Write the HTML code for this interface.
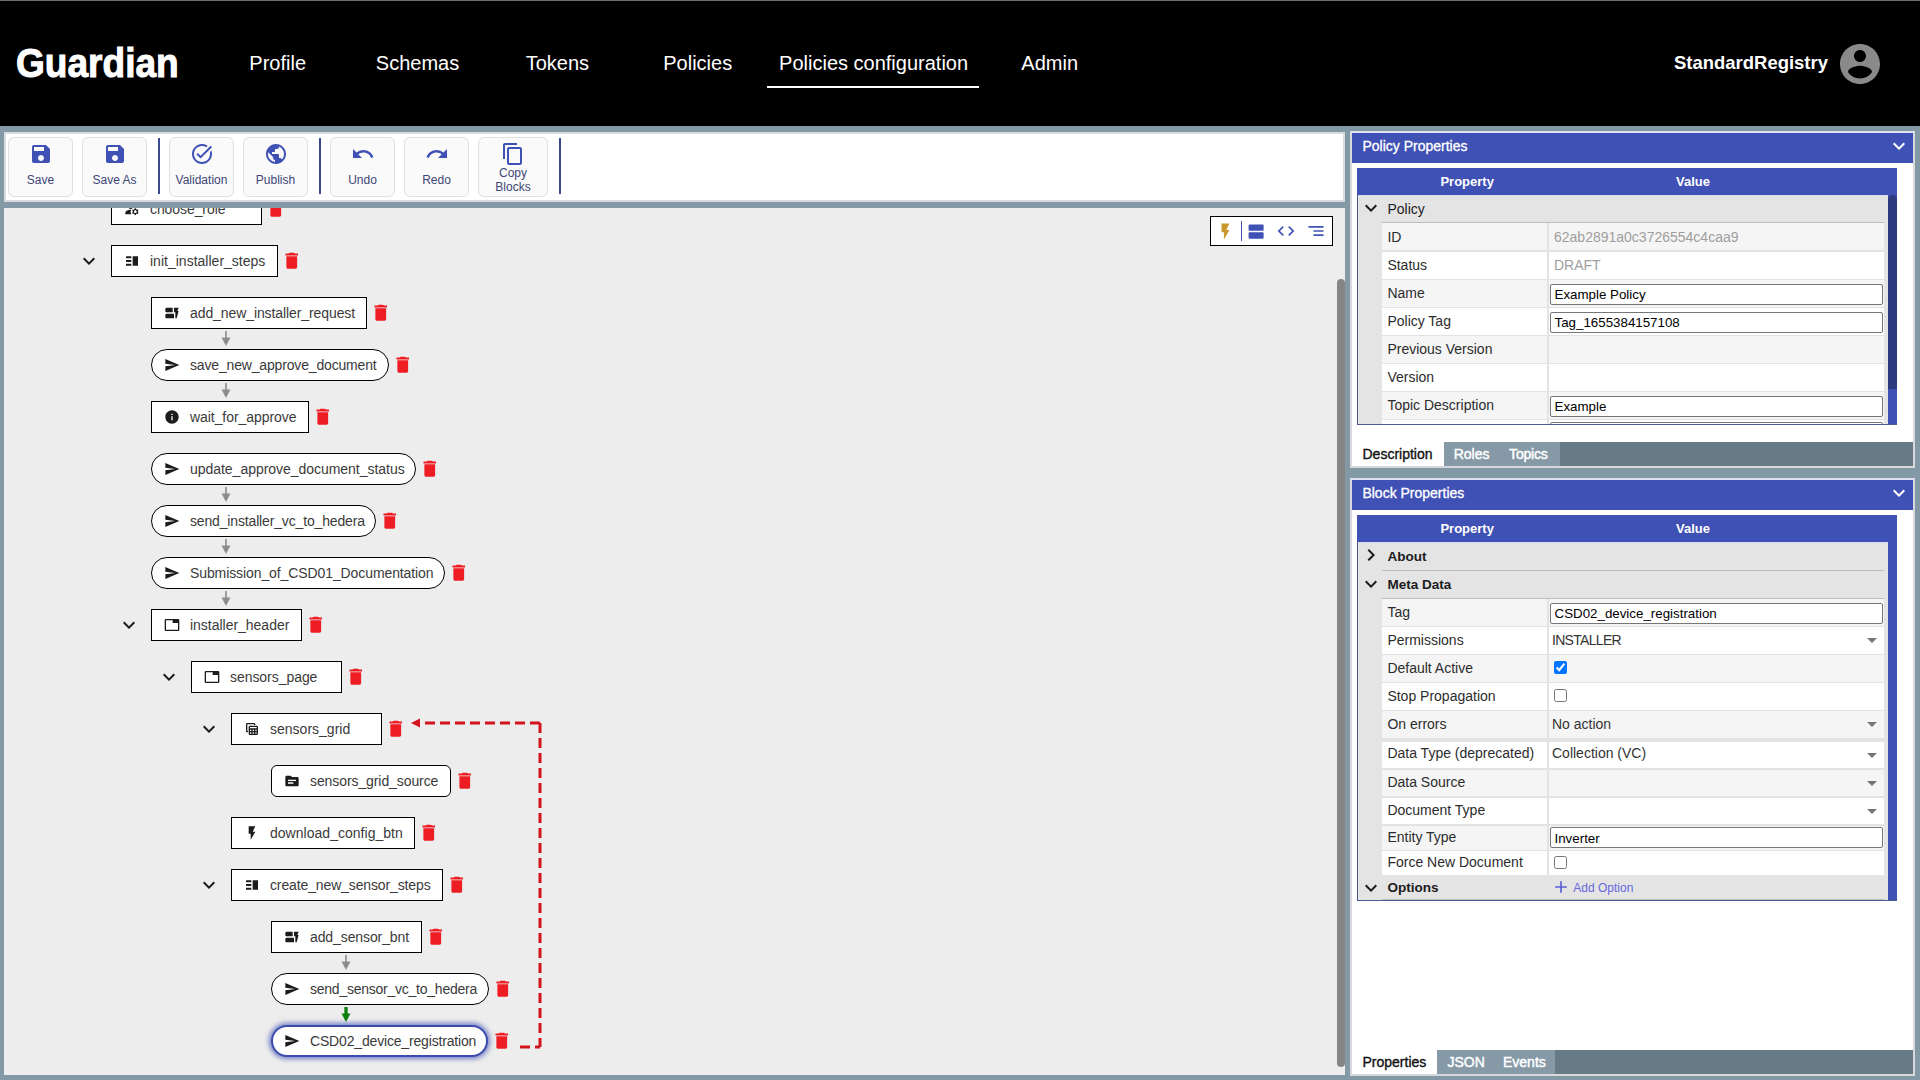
<!DOCTYPE html>
<html><head><meta charset="utf-8"><title>Guardian</title>
<style>
html,body{margin:0;padding:0;width:1920px;height:1080px;overflow:hidden;background:#8399a6;font-family:"Liberation Sans",sans-serif;}
.t{position:absolute;white-space:nowrap;line-height:1;}
svg{display:block}
</style></head><body>
<div style="position:absolute;left:0px;top:0px;width:1920px;height:126px;background:#000"></div>
<div style="position:absolute;left:0px;top:0px;width:1920px;height:1px;background:#6f6f6f"></div>
<div class="t" style="left:15.8px;top:43.02px;font-size:40.5px;color:#fff;font-weight:700;transform:scaleX(0.915);transform-origin:0 0;-webkit-text-stroke:1px #fff;">Guardian</div>
<div class="t" style="left:-22.30000000000001px;width:600px;text-align:center;top:53.07px;font-size:20px;color:#fff;font-weight:400;">Profile</div>
<div class="t" style="left:117.5px;width:600px;text-align:center;top:53.07px;font-size:20px;color:#fff;font-weight:400;">Schemas</div>
<div class="t" style="left:257.4px;width:600px;text-align:center;top:53.07px;font-size:20px;color:#fff;font-weight:400;">Tokens</div>
<div class="t" style="left:397.70000000000005px;width:600px;text-align:center;top:53.07px;font-size:20px;color:#fff;font-weight:400;">Policies</div>
<div class="t" style="left:573.6px;width:600px;text-align:center;top:53.07px;font-size:20px;color:#fff;font-weight:400;">Policies configuration</div>
<div class="t" style="left:749.7px;width:600px;text-align:center;top:53.07px;font-size:20px;color:#fff;font-weight:400;">Admin</div>
<div style="position:absolute;left:767px;top:86px;width:212px;height:2px;background:#fff"></div>
<div class="t" style="left:1673.5px;top:53.42px;font-size:19px;color:#fff;font-weight:700;transform:scaleX(0.972);transform-origin:0 0;">StandardRegistry</div>
<svg style="position:absolute;left:1836px;top:39.5px" width="48" height="48" viewBox="0 0 24 24"><path fill="#8a8a8a" d="M12 2C6.48 2 2 6.48 2 12s4.48 10 10 10 10-4.48 10-10S17.52 2 12 2zm0 3c1.66 0 3 1.34 3 3s-1.34 3-3 3-3-1.34-3-3 1.34-3 3-3zm0 14.2c-2.5 0-4.71-1.28-6-3.22.03-1.99 4-3.08 6-3.08 1.99 0 5.97 1.09 6 3.08-1.29 1.94-3.5 3.22-6 3.22z"/></svg>
<div style="position:absolute;left:4px;top:132px;width:1337px;height:66px;background:#fff;border:2px solid #d9dcdf"></div>
<div style="position:absolute;left:8px;top:137px;width:63px;height:58px;background:#fafafa;border:1px solid #e0e0e0;border-radius:6px"></div>
<svg style="position:absolute;left:28.5px;top:142px" width="24" height="24" viewBox="0 0 24 24"><path fill="#3f51b5" d="M17 3H5c-1.11 0-2 .9-2 2v14c0 1.1.89 2 2 2h14c1.1 0 2-.9 2-2V7l-4-4zm-5 16c-1.66 0-3-1.34-3-3s1.34-3 3-3 3 1.34 3 3-1.34 3-3 3zm3-10H5V5h10v4z"/></svg>
<div class="t" style="left:-259.5px;width:600px;text-align:center;top:173.64px;font-size:12px;color:#3d4677;font-weight:400;">Save</div>
<div style="position:absolute;left:82px;top:137px;width:63px;height:58px;background:#fafafa;border:1px solid #e0e0e0;border-radius:6px"></div>
<svg style="position:absolute;left:102.5px;top:142px" width="24" height="24" viewBox="0 0 24 24"><path fill="#3f51b5" d="M17 3H5c-1.11 0-2 .9-2 2v14c0 1.1.89 2 2 2h14c1.1 0 2-.9 2-2V7l-4-4zm-5 16c-1.66 0-3-1.34-3-3s1.34-3 3-3 3 1.34 3 3-1.34 3-3 3zm3-10H5V5h10v4z"/></svg>
<div class="t" style="left:-185.5px;width:600px;text-align:center;top:173.64px;font-size:12px;color:#3d4677;font-weight:400;">Save As</div>
<div style="position:absolute;left:169px;top:137px;width:63px;height:58px;background:#fafafa;border:1px solid #e0e0e0;border-radius:6px"></div>
<svg style="position:absolute;left:189.5px;top:142px" width="24" height="24" viewBox="0 0 24 24"><path fill="#3f51b5" d="M22 5.18L10.59 16.6l-4.24-4.24 1.41-1.41 2.83 2.83 10-10L22 5.18zm-2.21 5.04c.13.57.21 1.17.21 1.78 0 4.42-3.58 8-8 8s-8-3.58-8-8 3.58-8 8-8c1.58 0 3.04.46 4.28 1.25l1.44-1.44C16.1 2.67 14.13 2 12 2 6.48 2 2 6.48 2 12s4.48 10 10 10 10-4.48 10-10c0-1.19-.22-2.33-.6-3.39l-1.61 1.61z"/></svg>
<div class="t" style="left:-98.5px;width:600px;text-align:center;top:173.64px;font-size:12px;color:#3d4677;font-weight:400;">Validation</div>
<div style="position:absolute;left:243px;top:137px;width:63px;height:58px;background:#fafafa;border:1px solid #e0e0e0;border-radius:6px"></div>
<svg style="position:absolute;left:263.5px;top:142px" width="24" height="24" viewBox="0 0 24 24"><path fill="#3f51b5" d="M12 2C6.48 2 2 6.48 2 12s4.48 10 10 10 10-4.48 10-10S17.52 2 12 2zm-1 17.93c-3.95-.49-7-3.85-7-7.93 0-.62.08-1.21.21-1.79L9 15v1c0 1.1.9 2 2 2v1.93zm6.9-2.54c-.26-.81-1-1.39-1.9-1.39h-1v-3c0-.55-.45-1-1-1H8v-2h2c.55 0 1-.45 1-1V7h2c1.1 0 2-.9 2-2v-.41c2.93 1.19 5 4.06 5 7.41 0 2.08-.8 3.97-2.1 5.39z"/></svg>
<div class="t" style="left:-24.5px;width:600px;text-align:center;top:173.64px;font-size:12px;color:#3d4677;font-weight:400;">Publish</div>
<div style="position:absolute;left:330px;top:137px;width:63px;height:58px;background:#fafafa;border:1px solid #e0e0e0;border-radius:6px"></div>
<svg style="position:absolute;left:350.5px;top:142px" width="24" height="24" viewBox="0 0 24 24"><path fill="#3f51b5" d="M12.5 8c-2.65 0-5.05.99-6.9 2.6L2 7v9h9l-3.62-3.62c1.39-1.16 3.16-1.88 5.12-1.88 3.54 0 6.55 2.31 7.6 5.5l2.37-.78C21.08 11.03 17.15 8 12.5 8z"/></svg>
<div class="t" style="left:62.5px;width:600px;text-align:center;top:173.64px;font-size:12px;color:#3d4677;font-weight:400;">Undo</div>
<div style="position:absolute;left:404px;top:137px;width:63px;height:58px;background:#fafafa;border:1px solid #e0e0e0;border-radius:6px"></div>
<svg style="position:absolute;left:424.5px;top:142px" width="24" height="24" viewBox="0 0 24 24"><path fill="#3f51b5" d="M18.4 10.6C16.55 8.99 14.15 8 11.5 8c-4.65 0-8.58 3.03-9.96 7.22L3.9 16c1.05-3.19 4.05-5.5 7.6-5.5 1.95 0 3.73.72 5.12 1.88L13 16h9V7l-3.6 3.6z"/></svg>
<div class="t" style="left:136.5px;width:600px;text-align:center;top:173.64px;font-size:12px;color:#3d4677;font-weight:400;">Redo</div>
<div style="position:absolute;left:478px;top:137px;width:68px;height:58px;background:#fafafa;border:1px solid #e0e0e0;border-radius:6px"></div>
<svg style="position:absolute;left:501.0px;top:142px" width="24" height="24" viewBox="0 0 24 24"><path fill="#3f51b5" d="M16 1H4c-1.1 0-2 .9-2 2v14h2V3h12V1zm3 4H8c-1.1 0-2 .9-2 2v14c0 1.1.9 2 2 2h11c1.1 0 2-.9 2-2V7c0-1.1-.9-2-2-2zm0 16H8V7h11v14z"/></svg>
<div class="t" style="left:473.0px;width:80px;text-align:center;top:165.54px;font-size:12px;line-height:14px;color:#3d4677">Copy<br>Blocks</div>
<div style="position:absolute;left:158px;top:138px;width:1.5px;height:56px;background:#3b4a8f"></div>
<div style="position:absolute;left:319px;top:138px;width:1.5px;height:56px;background:#3b4a8f"></div>
<div style="position:absolute;left:559px;top:138px;width:1.5px;height:56px;background:#3b4a8f"></div>
<div style="position:absolute;left:4px;top:208px;width:1341px;height:867px;background:#ededed;overflow:hidden"><div style="position:absolute;left:-4px;top:-208px;width:1920px;height:1080px">
<div style="position:absolute;left:111px;top:193px;width:149px;height:30px;background:#fff;border:1px solid #000;border-radius:0;"></div>
<svg style="position:absolute;left:124px;top:201px" width="16" height="16" viewBox="0 0 24 24"><path fill="#1c1c1c" d="M10.67 13.02c-.22-.01-.44-.02-.67-.02-2.42 0-4.68.67-6.61 1.82-.88.52-1.39 1.5-1.39 2.53V20h9.26c-.79-1.13-1.26-2.51-1.26-4 0-1.07.25-2.07.67-2.98zM20.75 16c0-.22-.03-.42-.06-.63l1.14-1.01-1-1.73-1.45.49c-.32-.27-.68-.48-1.08-.63L18 11h-2l-.3 1.49c-.4.15-.76.36-1.08.63l-1.45-.49-1 1.73 1.14 1.01c-.03.21-.06.41-.06.63s.03.42.06.63l-1.14 1.01 1 1.73 1.45-.49c.32.27.68.48 1.08.63L16 21h2l.3-1.49c.4-.15.76-.36 1.08-.63l1.45.49 1-1.73-1.14-1.01c.03-.21.06-.41.06-.63zM17 18c-1.1 0-2-.9-2-2s.9-2 2-2 2 .9 2 2-.9 2-2 2zM10 4a4 4 0 1 0 .001 0z"/></svg>
<div class="t" style="left:150px;top:202.15px;font-size:14px;color:#3a3a3a;font-weight:400;letter-spacing:-0.082px;">choose_role</div>
<svg style="position:absolute;left:265.2px;top:198.25px" width="21.5" height="21.5" viewBox="0 0 24 24"><path fill="#ee1d23" d="M6 19c0 1.1.9 2 2 2h8c1.1 0 2-.9 2-2V7H6v12zM19 4h-3.5l-1-1h-5l-1 1H5v2h14V4z"/></svg>
<div style="position:absolute;left:111px;top:245px;width:165px;height:30px;background:#fff;border:1px solid #000;border-radius:0;"></div>
<svg style="position:absolute;left:124px;top:253px" width="16" height="16" viewBox="0 0 24 24"><path fill="#1c1c1c" d="M3 5h8v2.7H3zM3 10.65h8v2.7H3zM3 16.3h8v2.7H3zM13 5h8v14h-8z"/></svg>
<div class="t" style="left:150px;top:254.15px;font-size:14px;color:#3a3a3a;font-weight:400;letter-spacing:0.010px;">init_installer_steps</div>
<svg style="position:absolute;left:281.2px;top:250.25px" width="21.5" height="21.5" viewBox="0 0 24 24"><path fill="#ee1d23" d="M6 19c0 1.1.9 2 2 2h8c1.1 0 2-.9 2-2V7H6v12zM19 4h-3.5l-1-1h-5l-1 1H5v2h14V4z"/></svg>
<svg style="position:absolute;left:77px;top:249px" width="24" height="24" viewBox="0 0 24 24"><path fill="#1c1c1c" d="M16.59 8.59L12 13.17 7.41 8.59 6 10l6 6 6-6z"/></svg>
<div style="position:absolute;left:151px;top:297px;width:214px;height:30px;background:#fff;border:1px solid #000;border-radius:0;"></div>
<svg style="position:absolute;left:164px;top:305px" width="16" height="16" viewBox="0 0 24 24"><path fill="#1c1c1c" d="M17 20v-9h-2V4h7l-2 5h2l-3 11zM15 13v7H4c-1.1 0-2-.9-2-2v-3c0-1.1.9-2 2-2h11zM13 4v7H4c-1.1 0-2-.9-2-2V6c0-1.1.9-2 2-2h9z"/></svg>
<div class="t" style="left:190px;top:306.15px;font-size:14px;color:#3a3a3a;font-weight:400;letter-spacing:-0.092px;">add_new_installer_request</div>
<svg style="position:absolute;left:370.2px;top:302.25px" width="21.5" height="21.5" viewBox="0 0 24 24"><path fill="#ee1d23" d="M6 19c0 1.1.9 2 2 2h8c1.1 0 2-.9 2-2V7H6v12zM19 4h-3.5l-1-1h-5l-1 1H5v2h14V4z"/></svg>
<div style="position:absolute;left:151px;top:349px;width:236px;height:30px;background:#fff;border:1px solid #000;border-radius:16px;"></div>
<svg style="position:absolute;left:164px;top:357px" width="16" height="16" viewBox="0 0 24 24"><path fill="#1c1c1c" d="M2.01 21L23 12 2.01 3 2 10l15 2-15 2z"/></svg>
<div class="t" style="left:190px;top:358.15px;font-size:14px;color:#3a3a3a;font-weight:400;letter-spacing:-0.164px;">save_new_approve_document</div>
<svg style="position:absolute;left:392.2px;top:354.25px" width="21.5" height="21.5" viewBox="0 0 24 24"><path fill="#ee1d23" d="M6 19c0 1.1.9 2 2 2h8c1.1 0 2-.9 2-2V7H6v12zM19 4h-3.5l-1-1h-5l-1 1H5v2h14V4z"/></svg>
<div style="position:absolute;left:151px;top:401px;width:156px;height:30px;background:#fff;border:1px solid #000;border-radius:0;"></div>
<svg style="position:absolute;left:164px;top:409px" width="16" height="16" viewBox="0 0 24 24"><path fill="#1c1c1c" d="M12 2C6.48 2 2 6.48 2 12s4.48 10 10 10 10-4.48 10-10S17.52 2 12 2zm1 15h-2v-6h2v6zm0-8h-2V7h2v2z"/></svg>
<div class="t" style="left:190px;top:410.15px;font-size:14px;color:#3a3a3a;font-weight:400;letter-spacing:-0.062px;">wait_for_approve</div>
<svg style="position:absolute;left:312.2px;top:406.25px" width="21.5" height="21.5" viewBox="0 0 24 24"><path fill="#ee1d23" d="M6 19c0 1.1.9 2 2 2h8c1.1 0 2-.9 2-2V7H6v12zM19 4h-3.5l-1-1h-5l-1 1H5v2h14V4z"/></svg>
<div style="position:absolute;left:151px;top:453px;width:263px;height:30px;background:#fff;border:1px solid #000;border-radius:16px;"></div>
<svg style="position:absolute;left:164px;top:461px" width="16" height="16" viewBox="0 0 24 24"><path fill="#1c1c1c" d="M2.01 21L23 12 2.01 3 2 10l15 2-15 2z"/></svg>
<div class="t" style="left:190px;top:462.15px;font-size:14px;color:#3a3a3a;font-weight:400;letter-spacing:-0.033px;">update_approve_document_status</div>
<svg style="position:absolute;left:419.2px;top:458.25px" width="21.5" height="21.5" viewBox="0 0 24 24"><path fill="#ee1d23" d="M6 19c0 1.1.9 2 2 2h8c1.1 0 2-.9 2-2V7H6v12zM19 4h-3.5l-1-1h-5l-1 1H5v2h14V4z"/></svg>
<div style="position:absolute;left:151px;top:505px;width:223px;height:30px;background:#fff;border:1px solid #000;border-radius:16px;"></div>
<svg style="position:absolute;left:164px;top:513px" width="16" height="16" viewBox="0 0 24 24"><path fill="#1c1c1c" d="M2.01 21L23 12 2.01 3 2 10l15 2-15 2z"/></svg>
<div class="t" style="left:190px;top:514.15px;font-size:14px;color:#3a3a3a;font-weight:400;letter-spacing:-0.156px;">send_installer_vc_to_hedera</div>
<svg style="position:absolute;left:379.2px;top:510.25px" width="21.5" height="21.5" viewBox="0 0 24 24"><path fill="#ee1d23" d="M6 19c0 1.1.9 2 2 2h8c1.1 0 2-.9 2-2V7H6v12zM19 4h-3.5l-1-1h-5l-1 1H5v2h14V4z"/></svg>
<div style="position:absolute;left:151px;top:557px;width:292px;height:30px;background:#fff;border:1px solid #000;border-radius:16px;"></div>
<svg style="position:absolute;left:164px;top:565px" width="16" height="16" viewBox="0 0 24 24"><path fill="#1c1c1c" d="M2.01 21L23 12 2.01 3 2 10l15 2-15 2z"/></svg>
<div class="t" style="left:190px;top:566.15px;font-size:14px;color:#3a3a3a;font-weight:400;letter-spacing:-0.097px;">Submission_of_CSD01_Documentation</div>
<svg style="position:absolute;left:448.2px;top:562.25px" width="21.5" height="21.5" viewBox="0 0 24 24"><path fill="#ee1d23" d="M6 19c0 1.1.9 2 2 2h8c1.1 0 2-.9 2-2V7H6v12zM19 4h-3.5l-1-1h-5l-1 1H5v2h14V4z"/></svg>
<div style="position:absolute;left:151px;top:609px;width:149px;height:30px;background:#fff;border:1px solid #000;border-radius:0;"></div>
<svg style="position:absolute;left:164px;top:617px" width="16" height="16" viewBox="0 0 24 24"><path fill="#1c1c1c" d="M21 3H3c-1.1 0-2 .9-2 2v14c0 1.1.9 2 2 2h18c1.1 0 2-.9 2-2V5c0-1.1-.9-2-2-2zm0 16H3V5h10v4h8v10z"/></svg>
<div class="t" style="left:190px;top:618.15px;font-size:14px;color:#3a3a3a;font-weight:400;letter-spacing:-0.019px;">installer_header</div>
<svg style="position:absolute;left:305.2px;top:614.25px" width="21.5" height="21.5" viewBox="0 0 24 24"><path fill="#ee1d23" d="M6 19c0 1.1.9 2 2 2h8c1.1 0 2-.9 2-2V7H6v12zM19 4h-3.5l-1-1h-5l-1 1H5v2h14V4z"/></svg>
<svg style="position:absolute;left:117px;top:613px" width="24" height="24" viewBox="0 0 24 24"><path fill="#1c1c1c" d="M16.59 8.59L12 13.17 7.41 8.59 6 10l6 6 6-6z"/></svg>
<div style="position:absolute;left:191px;top:661px;width:149px;height:30px;background:#fff;border:1px solid #000;border-radius:0;"></div>
<svg style="position:absolute;left:204px;top:669px" width="16" height="16" viewBox="0 0 24 24"><path fill="#1c1c1c" d="M21 3H3c-1.1 0-2 .9-2 2v14c0 1.1.9 2 2 2h18c1.1 0 2-.9 2-2V5c0-1.1-.9-2-2-2zm0 16H3V5h10v4h8v10z"/></svg>
<div class="t" style="left:230px;top:670.15px;font-size:14px;color:#3a3a3a;font-weight:400;letter-spacing:-0.050px;">sensors_page</div>
<svg style="position:absolute;left:345.2px;top:666.25px" width="21.5" height="21.5" viewBox="0 0 24 24"><path fill="#ee1d23" d="M6 19c0 1.1.9 2 2 2h8c1.1 0 2-.9 2-2V7H6v12zM19 4h-3.5l-1-1h-5l-1 1H5v2h14V4z"/></svg>
<svg style="position:absolute;left:157px;top:665px" width="24" height="24" viewBox="0 0 24 24"><path fill="#1c1c1c" d="M16.59 8.59L12 13.17 7.41 8.59 6 10l6 6 6-6z"/></svg>
<div style="position:absolute;left:231px;top:713px;width:149px;height:30px;background:#fff;border:1px solid #000;border-radius:0;"></div>
<svg style="position:absolute;left:244px;top:721px" width="16" height="16" viewBox="0 0 24 24"><path fill="#1c1c1c" d="M19 7H9c-1.1 0-2 .9-2 2v10c0 1.1.9 2 2 2h10c1.1 0 2-.9 2-2V9c0-1.1-.9-2-2-2zm0 2v2H9V9h10zm-6 6v-2h2v2h-2zm2 2v2h-2v-2h2zm-4-2H9v-2h2v2zm6-2h2v2h-2v-2zm-8 4h2v2H9v-2zm8 2v-2h2v2h-2zM6 17H5c-1.1 0-2-.9-2-2V5c0-1.1.9-2 2-2h10c1.1 0 2 .9 2 2v1h-2V5H5v10h1v2z"/></svg>
<div class="t" style="left:270px;top:722.15px;font-size:14px;color:#3a3a3a;font-weight:400;letter-spacing:0.008px;">sensors_grid</div>
<svg style="position:absolute;left:385.2px;top:718.25px" width="21.5" height="21.5" viewBox="0 0 24 24"><path fill="#ee1d23" d="M6 19c0 1.1.9 2 2 2h8c1.1 0 2-.9 2-2V7H6v12zM19 4h-3.5l-1-1h-5l-1 1H5v2h14V4z"/></svg>
<svg style="position:absolute;left:197px;top:717px" width="24" height="24" viewBox="0 0 24 24"><path fill="#1c1c1c" d="M16.59 8.59L12 13.17 7.41 8.59 6 10l6 6 6-6z"/></svg>
<div style="position:absolute;left:271px;top:765px;width:178px;height:30px;background:#fff;border:1px solid #000;border-radius:6px;"></div>
<svg style="position:absolute;left:284px;top:773px" width="16" height="16" viewBox="0 0 24 24"><path fill="#1c1c1c" d="M20 6h-8l-2-2H4c-1.1 0-1.99.9-1.99 2L2 18c0 1.1.9 2 2 2h16c1.1 0 2-.9 2-2V8c0-1.1-.9-2-2-2zm-6 10H6v-2h8v2zm4-4H6v-2h12v2z"/></svg>
<div class="t" style="left:310px;top:774.15px;font-size:14px;color:#3a3a3a;font-weight:400;letter-spacing:-0.089px;">sensors_grid_source</div>
<svg style="position:absolute;left:454.2px;top:770.25px" width="21.5" height="21.5" viewBox="0 0 24 24"><path fill="#ee1d23" d="M6 19c0 1.1.9 2 2 2h8c1.1 0 2-.9 2-2V7H6v12zM19 4h-3.5l-1-1h-5l-1 1H5v2h14V4z"/></svg>
<div style="position:absolute;left:231px;top:817px;width:182px;height:30px;background:#fff;border:1px solid #000;border-radius:0;"></div>
<svg style="position:absolute;left:244px;top:825px" width="16" height="16" viewBox="0 0 24 24"><path fill="#1c1c1c" d="M7 2v11h3v9l7-12h-4l4-8z"/></svg>
<div class="t" style="left:270px;top:826.15px;font-size:14px;color:#3a3a3a;font-weight:400;letter-spacing:0.026px;">download_config_btn</div>
<svg style="position:absolute;left:418.2px;top:822.25px" width="21.5" height="21.5" viewBox="0 0 24 24"><path fill="#ee1d23" d="M6 19c0 1.1.9 2 2 2h8c1.1 0 2-.9 2-2V7H6v12zM19 4h-3.5l-1-1h-5l-1 1H5v2h14V4z"/></svg>
<div style="position:absolute;left:231px;top:869px;width:210px;height:30px;background:#fff;border:1px solid #000;border-radius:0;"></div>
<svg style="position:absolute;left:244px;top:877px" width="16" height="16" viewBox="0 0 24 24"><path fill="#1c1c1c" d="M3 5h8v2.7H3zM3 10.65h8v2.7H3zM3 16.3h8v2.7H3zM13 5h8v14h-8z"/></svg>
<div class="t" style="left:270px;top:878.15px;font-size:14px;color:#3a3a3a;font-weight:400;letter-spacing:-0.126px;">create_new_sensor_steps</div>
<svg style="position:absolute;left:446.2px;top:874.25px" width="21.5" height="21.5" viewBox="0 0 24 24"><path fill="#ee1d23" d="M6 19c0 1.1.9 2 2 2h8c1.1 0 2-.9 2-2V7H6v12zM19 4h-3.5l-1-1h-5l-1 1H5v2h14V4z"/></svg>
<svg style="position:absolute;left:197px;top:873px" width="24" height="24" viewBox="0 0 24 24"><path fill="#1c1c1c" d="M16.59 8.59L12 13.17 7.41 8.59 6 10l6 6 6-6z"/></svg>
<div style="position:absolute;left:271px;top:921px;width:149px;height:30px;background:#fff;border:1px solid #000;border-radius:0;"></div>
<svg style="position:absolute;left:284px;top:929px" width="16" height="16" viewBox="0 0 24 24"><path fill="#1c1c1c" d="M17 20v-9h-2V4h7l-2 5h2l-3 11zM15 13v7H4c-1.1 0-2-.9-2-2v-3c0-1.1.9-2 2-2h11zM13 4v7H4c-1.1 0-2-.9-2-2V6c0-1.1.9-2 2-2h9z"/></svg>
<div class="t" style="left:310px;top:930.15px;font-size:14px;color:#3a3a3a;font-weight:400;letter-spacing:-0.100px;">add_sensor_bnt</div>
<svg style="position:absolute;left:425.2px;top:926.25px" width="21.5" height="21.5" viewBox="0 0 24 24"><path fill="#ee1d23" d="M6 19c0 1.1.9 2 2 2h8c1.1 0 2-.9 2-2V7H6v12zM19 4h-3.5l-1-1h-5l-1 1H5v2h14V4z"/></svg>
<div style="position:absolute;left:271px;top:973px;width:216px;height:30px;background:#fff;border:1px solid #000;border-radius:16px;"></div>
<svg style="position:absolute;left:284px;top:981px" width="16" height="16" viewBox="0 0 24 24"><path fill="#1c1c1c" d="M2.01 21L23 12 2.01 3 2 10l15 2-15 2z"/></svg>
<div class="t" style="left:310px;top:982.15px;font-size:14px;color:#3a3a3a;font-weight:400;letter-spacing:-0.242px;">send_sensor_vc_to_hedera</div>
<svg style="position:absolute;left:492.2px;top:978.25px" width="21.5" height="21.5" viewBox="0 0 24 24"><path fill="#ee1d23" d="M6 19c0 1.1.9 2 2 2h8c1.1 0 2-.9 2-2V7H6v12zM19 4h-3.5l-1-1h-5l-1 1H5v2h14V4z"/></svg>
<div style="position:absolute;left:271px;top:1025px;width:213px;height:28px;background:#fff;border:2px solid #3b4cae;border-radius:16px;box-shadow:0 0 5px 2px rgba(63,81,181,0.7);"></div>
<svg style="position:absolute;left:284px;top:1033px" width="16" height="16" viewBox="0 0 24 24"><path fill="#1c1c1c" d="M2.01 21L23 12 2.01 3 2 10l15 2-15 2z"/></svg>
<div class="t" style="left:310px;top:1034.15px;font-size:14px;color:#3a3a3a;font-weight:400;letter-spacing:-0.168px;">CSD02_device_registration</div>
<svg style="position:absolute;left:491.2px;top:1030.25px" width="21.5" height="21.5" viewBox="0 0 24 24"><path fill="#ee1d23" d="M6 19c0 1.1.9 2 2 2h8c1.1 0 2-.9 2-2V7H6v12zM19 4h-3.5l-1-1h-5l-1 1H5v2h14V4z"/></svg>
<svg style="position:absolute;left:220px;top:331px" width="12" height="15" viewBox="0 0 12 15"><rect x="5.2" y="0" width="1.6" height="7" fill="#8c8c8c"/><path d="M1.5 6.5L10.5 6.5L6 15z" fill="#8c8c8c"/></svg>
<svg style="position:absolute;left:220px;top:383px" width="12" height="15" viewBox="0 0 12 15"><rect x="5.2" y="0" width="1.6" height="7" fill="#8c8c8c"/><path d="M1.5 6.5L10.5 6.5L6 15z" fill="#8c8c8c"/></svg>
<svg style="position:absolute;left:220px;top:487px" width="12" height="15" viewBox="0 0 12 15"><rect x="5.2" y="0" width="1.6" height="7" fill="#8c8c8c"/><path d="M1.5 6.5L10.5 6.5L6 15z" fill="#8c8c8c"/></svg>
<svg style="position:absolute;left:220px;top:539px" width="12" height="15" viewBox="0 0 12 15"><rect x="5.2" y="0" width="1.6" height="7" fill="#8c8c8c"/><path d="M1.5 6.5L10.5 6.5L6 15z" fill="#8c8c8c"/></svg>
<svg style="position:absolute;left:220px;top:591px" width="12" height="15" viewBox="0 0 12 15"><rect x="5.2" y="0" width="1.6" height="7" fill="#8c8c8c"/><path d="M1.5 6.5L10.5 6.5L6 15z" fill="#8c8c8c"/></svg>
<svg style="position:absolute;left:340px;top:955px" width="12" height="15" viewBox="0 0 12 15"><rect x="5.2" y="0" width="1.6" height="7" fill="#8c8c8c"/><path d="M1.5 6.5L10.5 6.5L6 15z" fill="#8c8c8c"/></svg>
<svg style="position:absolute;left:339.8px;top:1007px" width="12" height="15" viewBox="0 0 12 15"><rect x="4.35" y="0" width="3.3" height="7" fill="#0a7f0a"/><path d="M1.5 6.5L10.5 6.5L6 15z" fill="#0a7f0a"/></svg>
<svg style="position:absolute;left:0;top:0" width="1345" height="1080"><g fill="none" stroke="#d3141d" stroke-width="3" stroke-dasharray="10 5"><path d="M520 1047H540"/><path d="M540 723V1047"/><path d="M540 723H420"/></g><path d="M411 723L420 718.5V727.5z" fill="#d3141d"/></svg>
<div style="position:absolute;left:1210px;top:216px;width:121px;height:28px;background:#fff;border:1px solid #000"></div>
<svg style="position:absolute;left:1215.5px;top:221.5px" width="19" height="19" viewBox="0 0 24 24"><path fill="#c9982c" d="M7 2v11h3v9l7-12h-4l4-8z"/></svg>
<div style="position:absolute;left:1241px;top:221px;width:1px;height:20px;background:#3f51b5"></div>
<svg style="position:absolute;left:1246.5px;top:221.5px" width="19" height="19" viewBox="0 0 24 24"><path fill="#3f51b5" d="M20 13H3c-.55 0-1 .45-1 1v6c0 .55.45 1 1 1h17c.55 0 1-.45 1-1v-6c0-.55-.45-1-1-1zm0-10H3c-.55 0-1 .45-1 1v6c0 .55.45 1 1 1h17c.55 0 1-.45 1-1V4c0-.55-.45-1-1-1z"/></svg>
<svg style="position:absolute;left:1276px;top:221px" width="20" height="20" viewBox="0 0 24 24"><path fill="#3f51b5" d="M9.4 16.6L4.8 12l4.6-4.6L8 6l-6 6 6 6 1.4-1.4zm5.2 0l4.6-4.6-4.6-4.6L16 6l6 6-6 6-1.4-1.4z"/></svg>
<svg style="position:absolute;left:1306px;top:221px" width="20" height="20" viewBox="0 0 24 24"><path fill="#3f51b5" d="M9 18h12v-2H9v2zM3 6v2h18V6H3zm6 7h12v-2H9v2z"/></svg>
</div></div>
<div style="position:absolute;left:1337px;top:279px;width:8px;height:788px;background:#858585;border-radius:4px"></div>
<div style="position:absolute;left:1350px;top:131px;width:561px;height:333px;background:#fff;border:2px solid #d7d9dc;border-top-color:#dfe2f0"></div>
<div style="position:absolute;left:1352px;top:133px;width:561px;height:29.5px;background:#3f51b5"></div>
<div class="t" style="left:1362.4px;top:139.15px;font-size:14px;color:#fff;font-weight:400;-webkit-text-stroke:0.3px #fff;">Policy Properties</div>
<svg style="position:absolute;left:1886.8px;top:134.2px" width="24" height="24" viewBox="0 0 24 24"><path fill="#fff" d="M16.59 8.59L12 13.17 7.41 8.59 6 10l6 6 6-6z"/></svg>
<div style="position:absolute;left:1357px;top:168px;width:540px;height:27px;background:#3f51b5"></div>
<div class="t" style="left:1167.2px;width:600px;text-align:center;top:175.10px;font-size:13px;color:#fff;font-weight:700;">Property</div>
<div class="t" style="left:1393px;width:600px;text-align:center;top:175.10px;font-size:13px;color:#fff;font-weight:700;">Value</div>
<div style="position:absolute;left:1357px;top:195px;width:540px;height:230px;background:#3f51b5"></div>
<div style="position:absolute;left:1358px;top:195px;width:530px;height:229px;background:#e4e4e4"></div>
<div style="position:absolute;left:1888px;top:195px;width:9px;height:194px;background:#2e3a7e;border-radius:5px 5px 0 0"></div>
<div style="position:absolute;left:1357px;top:195px;width:1px;height:230px;background:#4b5482"></div>
<div style="position:absolute;left:1357px;top:424px;width:540px;height:1px;background:#4d5a96"></div>
<div style="position:absolute;left:1358px;top:195px;width:530px;height:1px;background:#d8dcf0"></div>
<svg style="position:absolute;left:1359px;top:196.4px" width="24" height="24" viewBox="0 0 24 24"><path fill="#1c1c1c" d="M16.59 8.59L12 13.17 7.41 8.59 6 10l6 6 6-6z"/></svg>
<div class="t" style="left:1387.4px;top:202.15px;font-size:14px;color:#1c1c1c;font-weight:400;">Policy</div>
<div style="position:absolute;left:1382px;top:222px;width:502px;height:1px;background:#bdbdbd"></div>
<div style="position:absolute;left:1382px;top:223px;width:502px;height:201px;overflow:hidden"><div style="position:absolute;left:-1382px;top:-223px;width:1920px;height:1080px">
<div style="position:absolute;left:1382px;top:223px;width:502px;height:28px;background:#e3e3e3"></div>
<div style="position:absolute;left:1382px;top:223px;width:165px;height:27px;background:#f5f5f5"></div>
<div style="position:absolute;left:1549px;top:223px;width:335px;height:27px;background:#f5f5f5"></div>
<div class="t" style="left:1387.4px;top:229.85px;font-size:14px;color:#2c2c2c;font-weight:400;">ID</div>
<div class="t" style="left:1554px;top:229.85px;font-size:14px;color:#9e9e9e;font-weight:400;">62ab2891a0c3726554c4caa9</div>
<div style="position:absolute;left:1382px;top:251px;width:502px;height:28px;background:#e3e3e3"></div>
<div style="position:absolute;left:1382px;top:251.5px;width:165px;height:27px;background:#fff"></div>
<div style="position:absolute;left:1549px;top:251.5px;width:335px;height:27px;background:#fff"></div>
<div class="t" style="left:1387.4px;top:257.85px;font-size:14px;color:#2c2c2c;font-weight:400;">Status</div>
<div class="t" style="left:1554px;top:257.85px;font-size:14px;color:#9e9e9e;font-weight:400;">DRAFT</div>
<div style="position:absolute;left:1382px;top:279px;width:502px;height:28px;background:#e3e3e3"></div>
<div style="position:absolute;left:1382px;top:279.5px;width:165px;height:27px;background:#f5f5f5"></div>
<div style="position:absolute;left:1549px;top:279.5px;width:335px;height:27px;background:#f5f5f5"></div>
<div class="t" style="left:1387.4px;top:285.85px;font-size:14px;color:#2c2c2c;font-weight:400;">Name</div>
<div style="position:absolute;left:1550px;top:284.2px;width:330.5px;height:18.5px;background:#fff;border:1px solid #767676;border-radius:2px"></div>
<div class="t" style="left:1554.5px;top:288.12px;font-size:13.33px;color:#000;font-weight:400;">Example Policy</div>
<div style="position:absolute;left:1382px;top:307px;width:502px;height:28px;background:#e3e3e3"></div>
<div style="position:absolute;left:1382px;top:307.5px;width:165px;height:27px;background:#fff"></div>
<div style="position:absolute;left:1549px;top:307.5px;width:335px;height:27px;background:#fff"></div>
<div class="t" style="left:1387.4px;top:313.85px;font-size:14px;color:#2c2c2c;font-weight:400;">Policy Tag</div>
<div style="position:absolute;left:1550px;top:312.2px;width:330.5px;height:18.5px;background:#fff;border:1px solid #767676;border-radius:2px"></div>
<div class="t" style="left:1554.5px;top:316.12px;font-size:13.33px;color:#000;font-weight:400;">Tag_1655384157108</div>
<div style="position:absolute;left:1382px;top:335px;width:502px;height:28px;background:#e3e3e3"></div>
<div style="position:absolute;left:1382px;top:335.5px;width:165px;height:27px;background:#f5f5f5"></div>
<div style="position:absolute;left:1549px;top:335.5px;width:335px;height:27px;background:#f5f5f5"></div>
<div class="t" style="left:1387.4px;top:341.85px;font-size:14px;color:#2c2c2c;font-weight:400;">Previous Version</div>
<div style="position:absolute;left:1382px;top:363px;width:502px;height:28px;background:#e3e3e3"></div>
<div style="position:absolute;left:1382px;top:363.5px;width:165px;height:27px;background:#fff"></div>
<div style="position:absolute;left:1549px;top:363.5px;width:335px;height:27px;background:#fff"></div>
<div class="t" style="left:1387.4px;top:369.85px;font-size:14px;color:#2c2c2c;font-weight:400;">Version</div>
<div style="position:absolute;left:1382px;top:391px;width:502px;height:28px;background:#e3e3e3"></div>
<div style="position:absolute;left:1382px;top:391.5px;width:165px;height:27px;background:#f5f5f5"></div>
<div style="position:absolute;left:1549px;top:391.5px;width:335px;height:27px;background:#f5f5f5"></div>
<div class="t" style="left:1387.4px;top:397.85px;font-size:14px;color:#2c2c2c;font-weight:400;">Topic Description</div>
<div style="position:absolute;left:1550px;top:396.2px;width:330.5px;height:18.5px;background:#fff;border:1px solid #767676;border-radius:2px"></div>
<div class="t" style="left:1554.5px;top:400.12px;font-size:13.33px;color:#000;font-weight:400;">Example</div>
<div style="position:absolute;left:1382px;top:419px;width:502px;height:28px;background:#e3e3e3"></div>
<div style="position:absolute;left:1382px;top:419.5px;width:165px;height:27px;background:#fff"></div>
<div style="position:absolute;left:1549px;top:419.5px;width:335px;height:27px;background:#fff"></div>
<div style="position:absolute;left:1550px;top:422px;width:330.5px;height:18.5px;background:#fff;border:1px solid #767676;border-radius:2px"></div>
<div class="t" style="left:1554.5px;top:428.12px;font-size:13.33px;color:#000;font-weight:400;"></div>
</div></div>
<div style="position:absolute;left:1352px;top:442px;width:92px;height:24px;background:#fff"></div>
<div style="position:absolute;left:1444px;top:442px;width:116px;height:24px;background:#8599a6"></div>
<div style="position:absolute;left:1560px;top:442px;width:353px;height:24px;background:#667b86"></div>
<div class="t" style="left:1362.5px;top:447.05px;font-size:14px;color:#111;font-weight:400;-webkit-text-stroke:0.35px #111;">Description</div>
<div class="t" style="left:1453.7px;top:447.05px;font-size:14px;color:#fff;font-weight:400;-webkit-text-stroke:0.45px #fff;">Roles</div>
<div class="t" style="left:1509.1px;top:447.05px;font-size:14px;color:#fff;font-weight:400;-webkit-text-stroke:0.45px #fff;letter-spacing:-0.2px;">Topics</div>
<div style="position:absolute;left:1350px;top:478px;width:561px;height:593.5px;background:#fff;border:2px solid #d7d9dc;border-top-color:#dfe2f0"></div>
<div style="position:absolute;left:1352px;top:480px;width:561px;height:29.5px;background:#3f51b5"></div>
<div class="t" style="left:1362.4px;top:486.15px;font-size:14px;color:#fff;font-weight:400;-webkit-text-stroke:0.3px #fff;">Block Properties</div>
<svg style="position:absolute;left:1886.8px;top:481.2px" width="24" height="24" viewBox="0 0 24 24"><path fill="#fff" d="M16.59 8.59L12 13.17 7.41 8.59 6 10l6 6 6-6z"/></svg>
<div style="position:absolute;left:1357px;top:515.3px;width:540px;height:27px;background:#3f51b5"></div>
<div class="t" style="left:1167.2px;width:600px;text-align:center;top:522.40px;font-size:13px;color:#fff;font-weight:700;">Property</div>
<div class="t" style="left:1393px;width:600px;text-align:center;top:522.40px;font-size:13px;color:#fff;font-weight:700;">Value</div>
<div style="position:absolute;left:1357px;top:542px;width:540px;height:359px;background:#3f51b5"></div>
<div style="position:absolute;left:1358px;top:542px;width:530px;height:358px;background:#e4e4e4"></div>
<div style="position:absolute;left:1357px;top:542px;width:1px;height:359px;background:#4b5482"></div>
<div style="position:absolute;left:1357px;top:900px;width:540px;height:1.3px;background:#4d5a96"></div>
<div style="position:absolute;left:1358px;top:542px;width:530px;height:1px;background:#d8dcf0"></div>
<svg style="position:absolute;left:1359px;top:543px" width="24" height="24" viewBox="0 0 24 24"><path fill="#1c1c1c" d="M10 6L8.59 7.41 13.17 12l-4.58 4.59L10 18l6-6z"/></svg>
<div class="t" style="left:1387.4px;top:549.87px;font-size:13.5px;color:#1c1c1c;font-weight:700;">About</div>
<div style="position:absolute;left:1382px;top:570px;width:502px;height:1px;background:#bdbdbd"></div>
<svg style="position:absolute;left:1359px;top:571.5px" width="24" height="24" viewBox="0 0 24 24"><path fill="#1c1c1c" d="M16.59 8.59L12 13.17 7.41 8.59 6 10l6 6 6-6z"/></svg>
<div class="t" style="left:1387.4px;top:577.57px;font-size:13.5px;color:#1c1c1c;font-weight:700;">Meta Data</div>
<div style="position:absolute;left:1382px;top:598px;width:502px;height:1px;background:#bdbdbd"></div>
<div style="position:absolute;left:1382px;top:599px;width:502px;height:276px;background:#e3e3e3"></div>
<div style="position:absolute;left:1382px;top:599px;width:165px;height:27px;background:#f5f5f5"></div>
<div style="position:absolute;left:1549px;top:599px;width:335px;height:27px;background:#f5f5f5"></div>
<div class="t" style="left:1387.4px;top:605.25px;font-size:14px;color:#2c2c2c;font-weight:400;">Tag</div>
<div style="position:absolute;left:1550px;top:603px;width:330.5px;height:19px;background:#fff;border:1px solid #767676;border-radius:2px"></div>
<div class="t" style="left:1554.5px;top:606.62px;font-size:13.33px;color:#000;font-weight:400;">CSD02_device_registration</div>
<div style="position:absolute;left:1382px;top:627px;width:165px;height:27px;background:#fff"></div>
<div style="position:absolute;left:1549px;top:627px;width:335px;height:27px;background:#fff"></div>
<div class="t" style="left:1387.4px;top:633.15px;font-size:14px;color:#2c2c2c;font-weight:400;">Permissions</div>
<div class="t" style="left:1552px;top:633.15px;font-size:14px;color:#333;font-weight:400;letter-spacing:-0.69px;">INSTALLER</div>
<svg style="position:absolute;left:1860px;top:628.0px" width="24" height="24" viewBox="0 0 24 24"><path fill="#757575" d="M7 10l5 5 5-5z"/></svg>
<div style="position:absolute;left:1382px;top:655px;width:165px;height:27px;background:#f5f5f5"></div>
<div style="position:absolute;left:1549px;top:655px;width:335px;height:27px;background:#f5f5f5"></div>
<div class="t" style="left:1387.4px;top:661.15px;font-size:14px;color:#2c2c2c;font-weight:400;">Default Active</div>
<input type="checkbox" checked style="position:absolute;left:1554px;top:661.0px;width:13px;height:13px;margin:0">
<div style="position:absolute;left:1382px;top:683px;width:165px;height:27px;background:#fff"></div>
<div style="position:absolute;left:1549px;top:683px;width:335px;height:27px;background:#fff"></div>
<div class="t" style="left:1387.4px;top:689.15px;font-size:14px;color:#2c2c2c;font-weight:400;">Stop Propagation</div>
<input type="checkbox"  style="position:absolute;left:1554px;top:689.0px;width:13px;height:13px;margin:0">
<div style="position:absolute;left:1382px;top:711px;width:165px;height:27px;background:#f5f5f5"></div>
<div style="position:absolute;left:1549px;top:711px;width:335px;height:27px;background:#f5f5f5"></div>
<div class="t" style="left:1387.4px;top:717.35px;font-size:14px;color:#2c2c2c;font-weight:400;">On errors</div>
<div class="t" style="left:1552px;top:717.35px;font-size:14px;color:#333;font-weight:400;">No action</div>
<svg style="position:absolute;left:1860px;top:712.0px" width="24" height="24" viewBox="0 0 24 24"><path fill="#757575" d="M7 10l5 5 5-5z"/></svg>
<div style="position:absolute;left:1382px;top:742px;width:165px;height:26px;background:#fff"></div>
<div style="position:absolute;left:1549px;top:742px;width:335px;height:26px;background:#fff"></div>
<div class="t" style="left:1387.4px;top:746.45px;font-size:14px;color:#2c2c2c;font-weight:400;">Data Type (deprecated)</div>
<div class="t" style="left:1552px;top:746.45px;font-size:14px;color:#333;font-weight:400;">Collection (VC)</div>
<svg style="position:absolute;left:1860px;top:742.5px" width="24" height="24" viewBox="0 0 24 24"><path fill="#757575" d="M7 10l5 5 5-5z"/></svg>
<div style="position:absolute;left:1382px;top:770px;width:165px;height:26px;background:#f5f5f5"></div>
<div style="position:absolute;left:1549px;top:770px;width:335px;height:26px;background:#f5f5f5"></div>
<div class="t" style="left:1387.4px;top:774.65px;font-size:14px;color:#2c2c2c;font-weight:400;">Data Source</div>
<svg style="position:absolute;left:1860px;top:770.5px" width="24" height="24" viewBox="0 0 24 24"><path fill="#757575" d="M7 10l5 5 5-5z"/></svg>
<div style="position:absolute;left:1382px;top:798px;width:165px;height:26px;background:#fff"></div>
<div style="position:absolute;left:1549px;top:798px;width:335px;height:26px;background:#fff"></div>
<div class="t" style="left:1387.4px;top:802.85px;font-size:14px;color:#2c2c2c;font-weight:400;">Document Type</div>
<svg style="position:absolute;left:1860px;top:798.5px" width="24" height="24" viewBox="0 0 24 24"><path fill="#757575" d="M7 10l5 5 5-5z"/></svg>
<div style="position:absolute;left:1382px;top:826px;width:165px;height:23.5px;background:#f5f5f5"></div>
<div style="position:absolute;left:1549px;top:826px;width:335px;height:23.5px;background:#f5f5f5"></div>
<div class="t" style="left:1387.4px;top:830.15px;font-size:14px;color:#2c2c2c;font-weight:400;">Entity Type</div>
<div style="position:absolute;left:1550px;top:827px;width:330.5px;height:19px;background:#fff;border:1px solid #767676;border-radius:2px"></div>
<div class="t" style="left:1554.5px;top:831.52px;font-size:13.33px;color:#000;font-weight:400;">Inverter</div>
<div style="position:absolute;left:1382px;top:851px;width:165px;height:24px;background:#fff"></div>
<div style="position:absolute;left:1549px;top:851px;width:335px;height:24px;background:#fff"></div>
<div class="t" style="left:1387.4px;top:854.95px;font-size:14px;color:#2c2c2c;font-weight:400;">Force New Document</div>
<input type="checkbox"  style="position:absolute;left:1554px;top:855.5px;width:13px;height:13px;margin:0">
<svg style="position:absolute;left:1359px;top:876.1px" width="24" height="24" viewBox="0 0 24 24"><path fill="#1c1c1c" d="M16.59 8.59L12 13.17 7.41 8.59 6 10l6 6 6-6z"/></svg>
<div class="t" style="left:1387.4px;top:880.67px;font-size:13.5px;color:#1c1c1c;font-weight:700;">Options</div>
<div style="position:absolute;left:1382px;top:899px;width:502px;height:1px;background:#bdbdbd"></div>
<svg style="position:absolute;left:1551px;top:877px" width="20" height="20" viewBox="0 0 24 24"><path fill="#5b5fd6" d="M19 13h-6v6h-2v-6H5v-2h6V5h2v6h6v2z"/></svg>
<div class="t" style="left:1573.3px;top:881.94px;font-size:12px;color:#6567dc;font-weight:400;">Add Option</div>
<div style="position:absolute;left:1352px;top:1050px;width:85px;height:24px;background:#fff"></div>
<div style="position:absolute;left:1437px;top:1050px;width:118px;height:24px;background:#8599a6"></div>
<div style="position:absolute;left:1555px;top:1050px;width:358px;height:24px;background:#667b86"></div>
<div class="t" style="left:1362.5px;top:1055.05px;font-size:14px;color:#111;font-weight:400;-webkit-text-stroke:0.35px #111;">Properties</div>
<div class="t" style="left:1447.5px;top:1055.05px;font-size:14px;color:#fff;font-weight:400;-webkit-text-stroke:0.45px #fff;">JSON</div>
<div class="t" style="left:1503px;top:1055.05px;font-size:14px;color:#fff;font-weight:400;-webkit-text-stroke:0.45px #fff;">Events</div>
</body></html>
